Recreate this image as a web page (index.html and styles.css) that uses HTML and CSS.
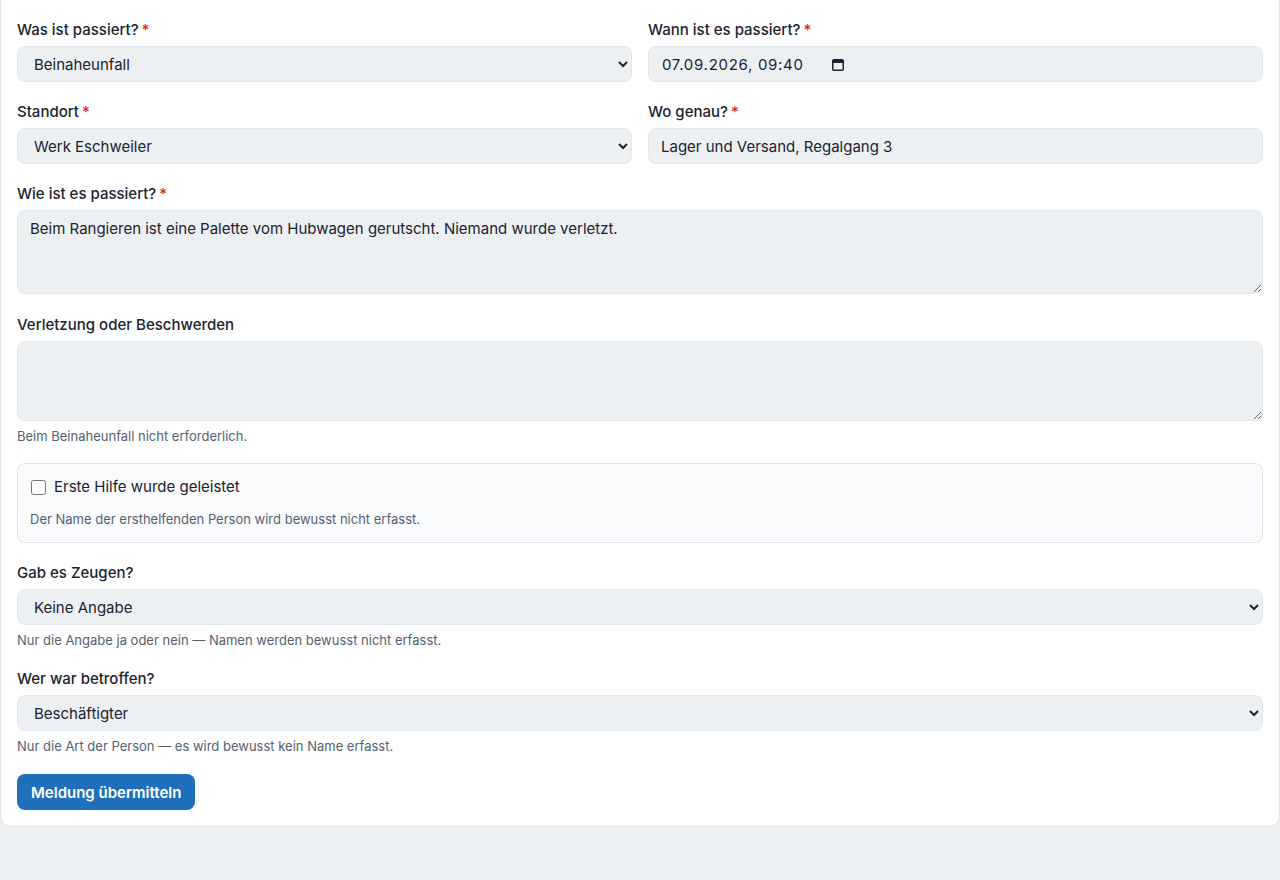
FILE: index.html
```html
<!DOCTYPE html>
<html lang="de">
<head>
<meta charset="utf-8">
<title>Unfallmeldung</title>
<link rel="stylesheet" href="styles.css">
</head>
<body>
<main class="card">
  <form class="report-form">
    <div class="row-2">
      <div class="field">
        <label class="label" for="art">Was ist passiert?<span class="req">*</span></label>
        <select id="art" class="control">
          <option>Beinaheunfall</option>
          <option>Arbeitsunfall</option>
        </select>
      </div>
      <div class="field">
        <label class="label" for="zeit">Wann ist es passiert?<span class="req">*</span></label>
        <div class="control date-control">
          <input id="zeit" class="date-text" type="text" value="07.09.2026, 09:40" inputmode="numeric">
          <svg class="date-icon" width="12" height="13" viewBox="0 0 12 13" aria-hidden="true">
            <rect x="0.75" y="1.75" width="10.5" height="10.5" rx="1" fill="none" stroke="#1b2330" stroke-width="1.5"/>
            <rect x="1" y="2" width="10" height="3" fill="#1b2330"/>
          </svg>
        </div>
      </div>
    </div>

    <div class="row-2">
      <div class="field">
        <label class="label" for="standort">Standort<span class="req">*</span></label>
        <select id="standort" class="control">
          <option>Werk Eschweiler</option>
        </select>
      </div>
      <div class="field">
        <label class="label" for="ort">Wo genau?<span class="req">*</span></label>
        <input id="ort" class="control" type="text" value="Lager und Versand, Regalgang 3">
      </div>
    </div>

    <div class="field">
      <label class="label" for="hergang">Wie ist es passiert?<span class="req">*</span></label>
      <textarea id="hergang" class="control area area-lg">Beim Rangieren ist eine Palette vom Hubwagen gerutscht. Niemand wurde verletzt.</textarea>
    </div>

    <div class="field field-gap">
      <label class="label" for="verletzung">Verletzung oder Beschwerden</label>
      <textarea id="verletzung" class="control area area-md"></textarea>
      <p class="hint">Beim Beinaheunfall nicht erforderlich.</p>
    </div>

    <div class="panel">
      <label class="check">
        <input type="checkbox" class="check-box">
        <span>Erste Hilfe wurde geleistet</span>
      </label>
      <p class="hint panel-hint">Der Name der ersthelfenden Person wird bewusst nicht erfasst.</p>
    </div>

    <div class="field">
      <label class="label" for="zeugen">Gab es Zeugen?</label>
      <select id="zeugen" class="control">
        <option>Keine Angabe</option>
        <option>Ja</option>
        <option>Nein</option>
      </select>
      <p class="hint">Nur die Angabe ja oder nein — Namen werden bewusst nicht erfasst.</p>
    </div>

    <div class="field">
      <label class="label" for="betroffen">Wer war betroffen?</label>
      <select id="betroffen" class="control">
        <option>Beschäftigter</option>
      </select>
      <p class="hint">Nur die Art der Person — es wird bewusst kein Name erfasst.</p>
    </div>

    <div class="actions">
      <button type="button" class="btn-primary">Meldung übermitteln</button>
    </div>
  </form>
</main>
</body>
</html>
```

FILE: styles.css
```css
* {
  box-sizing: border-box;
}

html, body {
  margin: 0;
  padding: 0;
}

body {
  background: #eef1f4;
  font-family: Inter, "Noto Sans", "Liberation Sans", sans-serif;
  color: #1b2330;
  font-size: 15px;
  min-height: 880px;
}

.card {
  background: #ffffff;
  border: 1px solid #e2e6ea;
  border-top: 0;
  border-radius: 0 0 10px 10px;
  padding: 18px 16px 16px;
}

.report-form {
  display: flex;
  flex-direction: column;
  gap: 18px;
}

.row-2 {
  display: grid;
  grid-template-columns: 1fr 1fr;
  gap: 16px;
}

.field {
  display: flex;
  flex-direction: column;
  min-width: 0;
}

.field-gap {
  margin-top: 1px;
}

.label {
  font-size: 15px;
  line-height: 23px;
  font-weight: 500;
  color: #1b2330;
  margin-bottom: 5px;
}

.req {
  color: #d42a2a;
  margin-left: 3px;
}

.control {
  width: 100%;
  height: 36px;
  background: #edf0f3;
  border: 1px solid #e3e7eb;
  border-radius: 8px;
  padding: 0 12px;
  font-family: inherit;
  font-size: 15px;
  color: #1b2330;
  outline: none;
}

/* date/time field: text plus calendar glyph right after it */
.date-control {
  display: flex;
  align-items: center;
  gap: 14px;
  padding-left: 13px;
}

.date-text {
  width: 156px;
  border: 0;
  padding: 0;
  margin: 0;
  background: transparent;
  font-family: inherit;
  font-size: 15px;
  color: #1b2330;
  outline: none;
  letter-spacing: 0.7px;
}

.date-icon {
  flex: none;
}

.area {
  padding: 8px 12px;
  line-height: 20px;
  resize: vertical;
}

.area-lg {
  height: 84px;
}

.area-md {
  height: 80px;
}

.hint {
  margin: 6px 0 0;
  font-size: 13px;
  line-height: 18px;
  color: #566070;
}

.panel {
  background: #fafbfd;
  border: 1px solid #e2e6ea;
  border-radius: 8px;
  padding: 12px 12px 14px;
}

.check {
  display: flex;
  align-items: center;
  gap: 8px;
  font-size: 15px;
  line-height: 22px;
  color: #1b2330;
}

.check-box {
  width: 15px;
  height: 15px;
  margin: 0 0 0 1px;
}

.panel-hint {
  margin-top: 12px;
}

.actions {
  margin-top: 1px;
}

.btn-primary {
  background: #1f6fbd;
  color: #ffffff;
  border: 0;
  border-radius: 8px;
  height: 36px;
  padding: 0 14px;
  font-family: inherit;
  font-size: 15px;
  font-weight: 600;
  cursor: pointer;
}
```
